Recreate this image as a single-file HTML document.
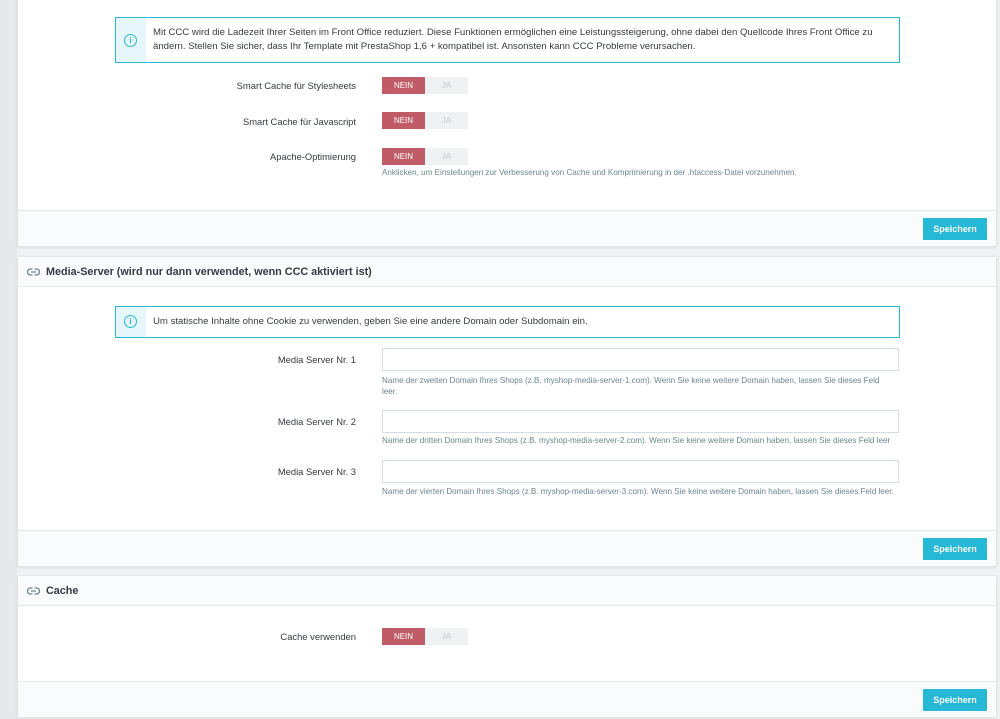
<!DOCTYPE html>
<html><head><meta charset="utf-8"><style>
*{box-sizing:border-box;margin:0;padding:0}
body{width:1000px;height:719px;background:#eff1f2;font-family:"Liberation Sans",sans-serif;color:#363a41;position:relative;overflow:hidden}
.strip{position:absolute;left:0;top:0;width:17px;height:719px;background:#e6e8ea}
.panel{position:absolute;left:17px;width:980px;background:#fff;border:1px solid #e3e6e8;border-radius:3px;box-shadow:0 1px 2px rgba(0,0,0,.08)}
.head{position:absolute;left:0;right:0;top:0;height:30px;background:#fafbfc;border-bottom:1px solid #e3e6e8;font-size:10.8px;font-weight:bold;line-height:30px;padding-left:28px;color:#363a41}
.foot{position:absolute;left:0;right:0;bottom:0;height:36px;background:#fafbfc;border-top:1px solid #e3e6e8}
.btn{position:absolute;right:9px;top:7px;width:64px;height:22px;background:#25b9d7;color:#fff;font-size:9px;font-weight:bold;text-align:center;line-height:22px;border-radius:1px}
.info{position:absolute;border:1.5px solid #25b9d7;background:#fff;font-size:9.6px;line-height:14px;color:#363a41}
.info .ic{position:absolute;left:0;top:0;bottom:0;width:30px;background:#e6f6fa}
.info .ic span{position:absolute;left:8px;width:13px;height:13px;border:1.3px solid #25b9d7;border-radius:50%;color:#25b9d7;font-size:8px;line-height:11px;text-align:center;font-weight:bold}
.info .t{position:absolute;left:37px;right:6px}
.lbl{position:absolute;right:644px;font-size:9.4px;color:#363a41;text-align:right;white-space:nowrap}
.tog{position:absolute;left:382px;width:86px;height:17px;font-size:8px;line-height:17px}
.tog .n{position:absolute;left:0;width:43px;height:17px;background:#c05c67;color:#fff;text-align:center}
.tog .j{position:absolute;left:43px;width:43px;height:17px;background:#eff1f2;color:#c5cacd;text-align:center}
.help{position:absolute;left:382px;font-size:8.1px;color:#6c868e;line-height:11px;width:520px}
.inp{position:absolute;left:382px;width:517px;height:23px;border:1px solid #d3dde2;background:#fff}
.lk{position:absolute;left:9px;top:11px;width:13px;height:8px}
</style></head><body>
<div class="strip"></div>

<div class="panel" style="top:-5px;height:252px">
  <div class="info" style="left:97px;top:21px;width:785px;height:46px"><div class="ic"><span style="top:16px">i</span></div>
    <div class="t" style="top:8px">Mit CCC wird die Ladezeit Ihrer Seiten im Front Office reduziert. Diese Funktionen ermöglichen eine Leistungssteigerung, ohne dabei den Quellcode Ihres Front Office zu ändern. Stellen Sie sicher, dass Ihr Template mit PrestaShop 1,6 + kompatibel ist. Ansonsten kann CCC Probleme verursachen.</div></div>
  <div class="foot"><div class="btn">Speichern</div></div>
</div>
<div class="lbl" style="top:80px">Smart Cache für Stylesheets</div>
<div class="tog" style="top:77px"><div class="n">NEIN</div><div class="j">JA</div></div>
<div class="lbl" style="top:116px">Smart Cache für Javascript</div>
<div class="tog" style="top:112px"><div class="n">NEIN</div><div class="j">JA</div></div>
<div class="lbl" style="top:151px">Apache-Optimierung</div>
<div class="tog" style="top:148px"><div class="n">NEIN</div><div class="j">JA</div></div>
<div class="help" style="top:167px;width:560px">Anklicken, um Einstellungen zur Verbesserung von Cache und Komprimierung in der .htaccess-Datei vorzunehmen.</div>

<div class="panel" style="top:256px;height:311px">
  <div class="head"><svg class="lk" viewBox="0 0 13 8"><path d="M5.5 1H3.5a3 3 0 0 0 0 6h2M7.5 1h2a3 3 0 0 1 0 6h-2M4 4h5" fill="none" stroke="#6c868e" stroke-width="1.3"/></svg>Media-Server (wird nur dann verwendet, wenn CCC aktiviert ist)</div>
  <div class="info" style="left:97px;top:49px;width:785px;height:32px"><div class="ic"><span style="top:8px">i</span></div>
    <div class="t" style="top:8px">Um statische Inhalte ohne Cookie zu verwenden, geben Sie eine andere Domain oder Subdomain ein.</div></div>
  <div class="foot"><div class="btn">Speichern</div></div>
</div>
<div class="lbl" style="top:354px">Media Server Nr. 1</div>
<div class="inp" style="top:348px"></div>
<div class="help" style="top:375px">Name der zweiten Domain Ihres Shops (z.B. myshop-media-server-1.com). Wenn Sie keine weitere Domain haben, lassen Sie dieses Feld<br>leer.</div>
<div class="lbl" style="top:416px">Media Server Nr. 2</div>
<div class="inp" style="top:410px"></div>
<div class="help" style="top:435px;width:560px">Name der dritten Domain Ihres Shops (z.B. myshop-media-server-2.com). Wenn Sie keine weitere Domain haben, lassen Sie dieses Feld leer</div>
<div class="lbl" style="top:466px">Media Server Nr. 3</div>
<div class="inp" style="top:460px"></div>
<div class="help" style="top:486px;width:560px">Name der vierten Domain Ihres Shops (z.B. myshop-media-server-3.com). Wenn Sie keine weitere Domain haben, lassen Sie dieses Feld leer.</div>

<div class="panel" style="top:575px;height:143px">
  <div class="head"><svg class="lk" viewBox="0 0 13 8"><path d="M5.5 1H3.5a3 3 0 0 0 0 6h2M7.5 1h2a3 3 0 0 1 0 6h-2M4 4h5" fill="none" stroke="#6c868e" stroke-width="1.3"/></svg>Cache</div>
  <div class="foot"><div class="btn">Speichern</div></div>
</div>
<div class="lbl" style="top:631px">Cache verwenden</div>
<div class="tog" style="top:628px"><div class="n">NEIN</div><div class="j">JA</div></div>
</body></html>
